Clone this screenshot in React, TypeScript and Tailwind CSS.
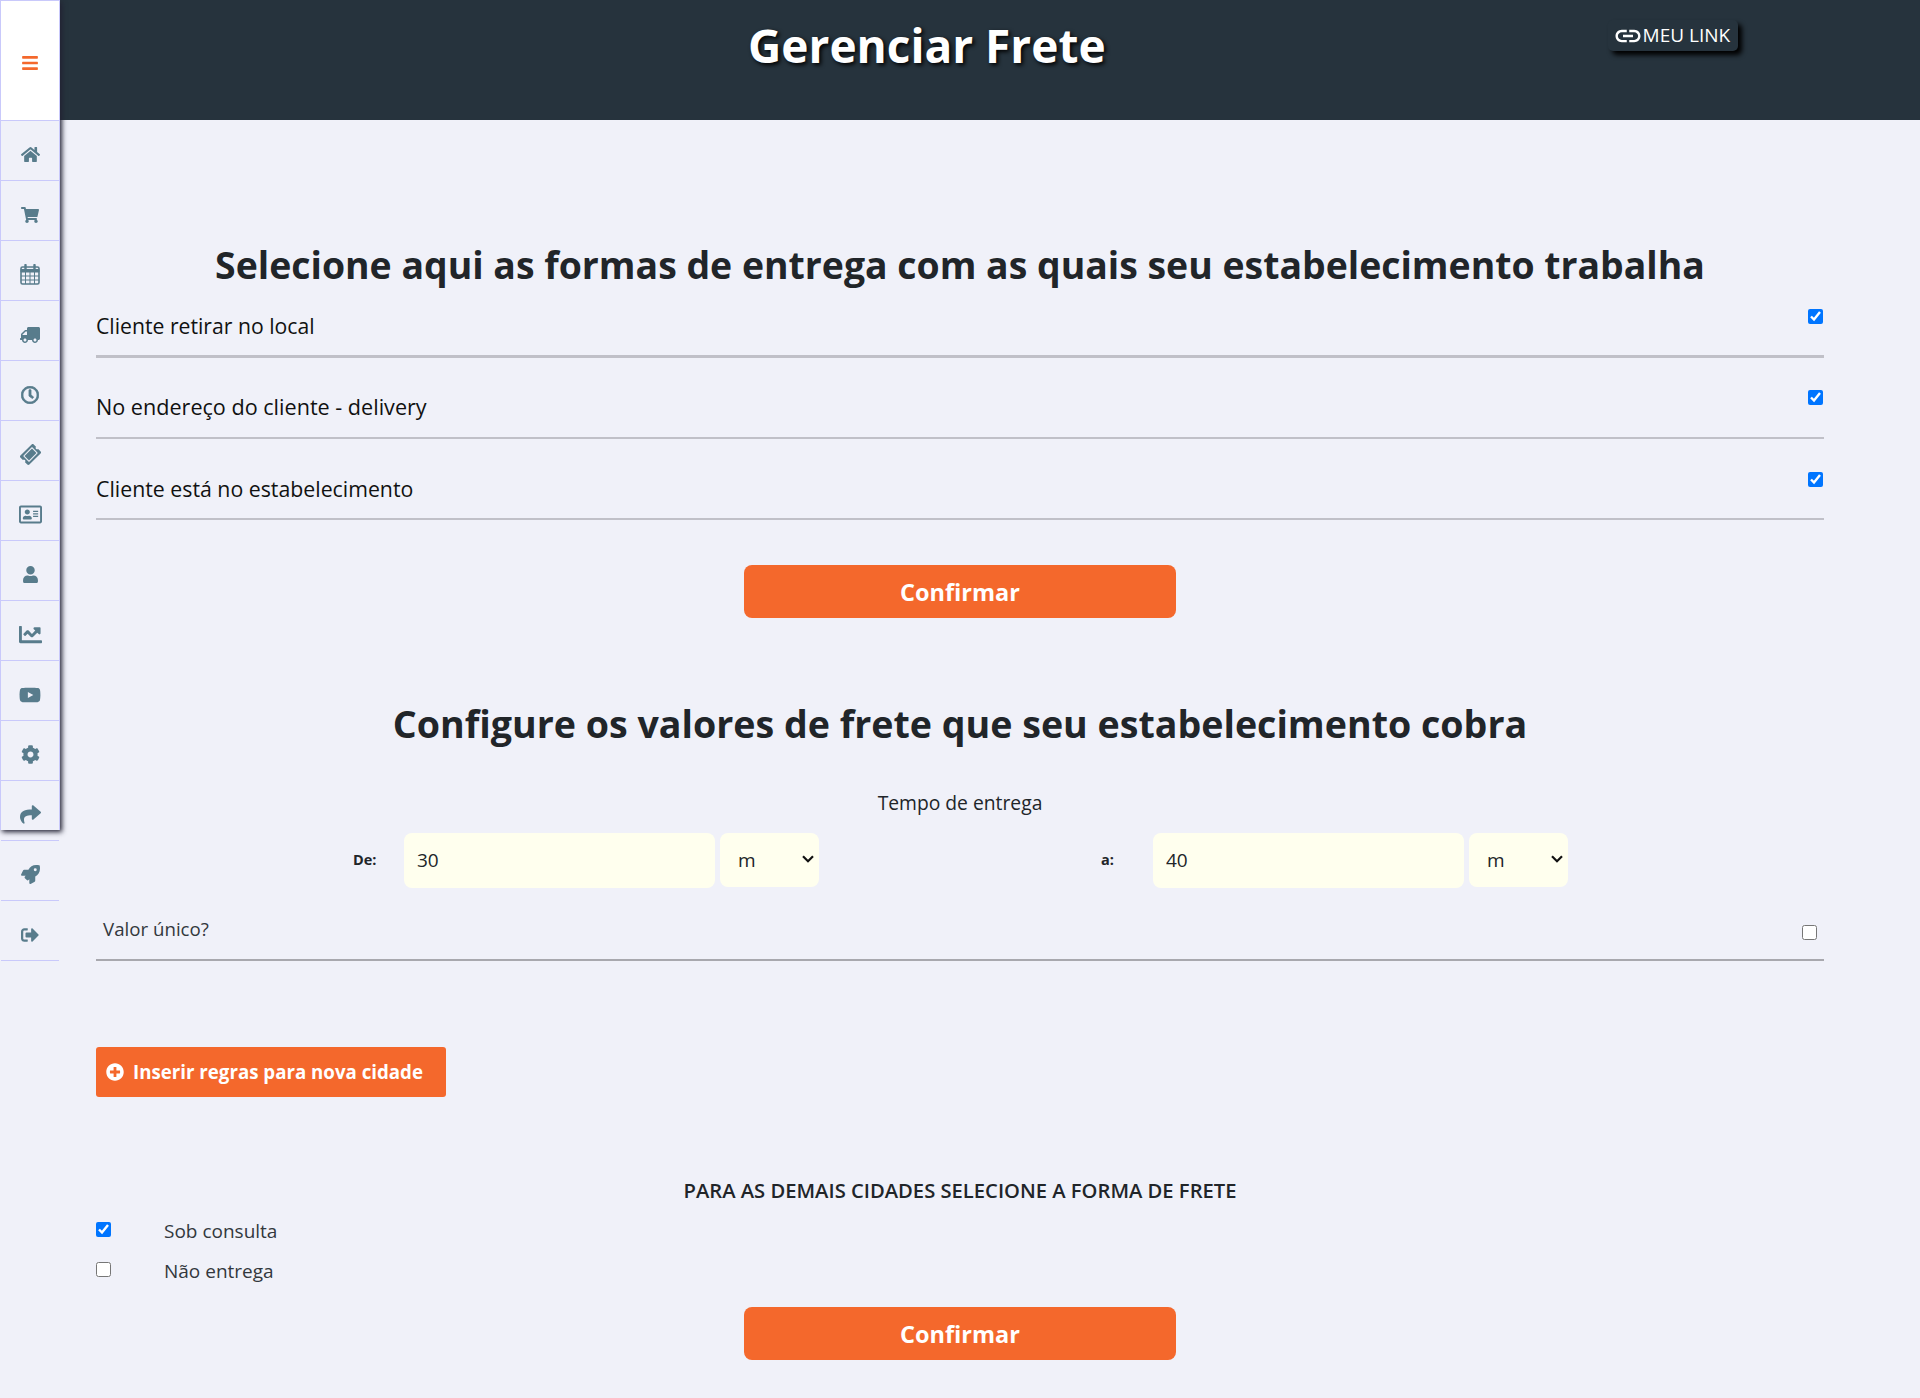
import {
  FaBars, FaHome, FaShoppingCart, FaTruck, FaRegClock, FaTicketAlt, FaRegAddressCard,
  FaUser, FaChartLine, FaYoutube, FaCog, FaShare, FaRocket, FaSignOutAlt, FaPlusCircle,
} from "react-icons/fa"
import { MdLink } from "react-icons/md"

const font = "font-['Open_Sans','Noto_Sans',sans-serif]"

const CalendarIcon = () => (
    <svg width="20" height="21" viewBox="0 0 20 21" fill="none" stroke="currentColor">
        <rect x="1" y="3" width="18" height="17" rx="1.5" strokeWidth="1.6" />
        <path d="M1 5.5h18V8H1z" fill="currentColor" strokeWidth="1" />
        <path d="M1 12h18M1 16h18M5.5 8v12M10 8v12M14.5 8v12" strokeWidth="1" />
        <path d="M5.5 1v4M14.5 1v4" strokeWidth="2.4" strokeLinecap="round" />
    </svg>
)

const SelectM = () => (
    <div className="relative ml-[5px] h-[54px] w-[99px]">
        <select className="h-full w-full appearance-none rounded-[8px] bg-[#ffffee] pl-[18px] text-[19px]"><option>m</option></select>
        <svg className="pointer-events-none absolute right-[5px] top-[22px]" width="12" height="8" viewBox="0 0 12 8" fill="none" stroke="#111" strokeWidth="2.2">
            <path d="M1 1.2l5 5 5-5" />
        </svg>
    </div>
)

const Sidebar = () => (
    <aside className="relative z-10 w-[60px] shrink-0">
        <div className="h-[830px] overflow-hidden border-x border-[#c9c9fb] shadow-[2px_2px_5px_#222233]">
            <div className="flex h-[121px] items-center justify-center border-y border-[#c9c9fb] bg-white pt-[5px]">
                <FaBars className="text-[18px] text-[#f4682c]" />
            </div>
            <div className="flex h-[60px] items-center justify-center border-b border-[#c9c9fb] pt-[8px] text-[#587c8c]"><FaHome className="text-[19px]" /></div>
            <div className="flex h-[60px] items-center justify-center border-b border-[#c9c9fb] pt-[8px] text-[#587c8c]"><FaShoppingCart className="text-[18px]" /></div>
            <div className="flex h-[60px] items-center justify-center border-b border-[#c9c9fb] pt-[8px] text-[#587c8c]"><CalendarIcon /></div>
            <div className="flex h-[60px] items-center justify-center border-b border-[#c9c9fb] pt-[8px] text-[#587c8c]"><FaTruck className="-scale-x-100 text-[20px]" /></div>
            <div className="flex h-[60px] items-center justify-center border-b border-[#c9c9fb] pt-[8px] text-[#587c8c]"><FaRegClock className="text-[18px]" stroke="currentColor" strokeWidth={24} /></div>
            <div className="flex h-[60px] items-center justify-center border-b border-[#c9c9fb] pt-[8px] text-[#587c8c]"><FaTicketAlt className="-rotate-45 text-[19px]" /></div>
            <div className="flex h-[60px] items-center justify-center border-b border-[#c9c9fb] pt-[8px] text-[#587c8c]"><FaRegAddressCard className="text-[23px]" /></div>
            <div className="flex h-[60px] items-center justify-center border-b border-[#c9c9fb] pt-[8px] text-[#587c8c]"><FaUser className="text-[17px]" /></div>
            <div className="flex h-[60px] items-center justify-center border-b border-[#c9c9fb] pt-[8px] text-[#587c8c]"><FaChartLine className="text-[23px]" /></div>
            <div className="flex h-[60px] items-center justify-center border-b border-[#c9c9fb] pt-[8px] text-[#587c8c]"><FaYoutube className="text-[22px]" /></div>
            <div className="flex h-[60px] items-center justify-center border-b border-[#c9c9fb] pt-[8px] text-[#587c8c]"><FaCog className="text-[19px]" /></div>
            <div className="flex h-[50px] items-center justify-center pt-[16px] text-[#587c8c]"><FaShare className="text-[21px]" /></div>
        </div>
        <div className="mx-px mt-[10px] border-t border-[#c9c9fb]">
            <div className="flex h-[60px] items-center justify-center border-b border-[#c9c9fb] pt-[8px] text-[#587c8c]">
                <FaRocket className="text-[19px]" />
            </div>
            <div className="flex h-[60px] items-center justify-center border-b border-[#c9c9fb] pt-[8px] text-[#587c8c]">
                <FaSignOutAlt className="text-[18px]" />
            </div>
        </div>
    </aside>
)

const CheckRow = ({ label, lineClass, mt, size }: { label: string; lineClass: string; mt: string; size: string }) => (
    <div className={`flex justify-between ${mt} ${lineClass} border-[#c0c0c8]`}>
        <span className={`mt-px pb-[13px] ${size} leading-[32px] text-[#111]`}>{label}</span>
        <input type="checkbox" defaultChecked className="m-0 mr-px h-[15px] w-[15px] shrink-0" />
    </div>
)

const ConfirmButton = ({ mt }: { mt: string }) => (
    <button className={`mx-auto ${mt} block h-[53px] w-[432px] rounded-[8px] bg-[#f4682c] pt-[2px] text-[23.5px] font-bold text-white`}>
        Confirmar
    </button>
)

const App = () => {
    return (
        <div className={`${font} flex h-[1398px] w-[1920px] overflow-hidden bg-[#f0f1f9] text-[#212529]`}>
            <Sidebar />
            <div className="min-w-0 flex-1">
                <header className="flex h-[120px] items-start bg-[#26333d] text-white">
                    <h1 className="ml-[688px] mt-[9px] text-[46px] font-bold leading-[72px] [text-shadow:2px_2px_4px_#000]">Gerenciar Frete</h1>
                    <div className="ml-[502px] mt-[20px] flex h-[31px] w-[130px] items-center rounded-[5px] pl-[5px] text-[19px] shadow-[4px_4px_5px_#000]">
                        <MdLink className="shrink-0 text-[30px]" />
                        <span>MEU LINK</span>
                    </div>
                </header>

                <main className="pl-[36px] pr-[96px]">
                    <h2 className="mt-[115px] pt-px text-center text-[37.4px] font-bold leading-[57px]">
                        Selecione aqui as formas de entrega com as quais seu estabelecimento trabalha
                    </h2>
                    <CheckRow label="Cliente retirar no local" size="text-[21.2px]" lineClass="border-b-[3px]" mt="mt-[16px]" />
                    <CheckRow label="No endereço do cliente - delivery" size="text-[21.6px]" lineClass="border-b-2 pb-px" mt="mt-[32px]" />
                    <CheckRow label="Cliente está no estabelecimento" size="text-[21.3px]" lineClass="border-b-2" mt="mt-[33px]" />
                    <ConfirmButton mt="mt-[45px]" />

                    <h2 className="mt-[77px] text-center text-[37.6px] font-bold leading-[58px]">
                        Configure os valores de frete que seu estabelecimento cobra
                    </h2>
                    <p className="mt-[36px] text-center text-[19.3px] font-medium leading-[28px]">Tempo de entrega</p>

                    <div className="mt-[15px] flex h-[56px] items-center">
                        <label className="ml-[257px] w-[51px] text-[14.5px] font-bold">De:</label>
                        <input defaultValue="30" className="h-[55px] w-[311px] rounded-[8px] bg-[#ffffee] px-[13px] text-[19px] outline-none" />
                        <SelectM />
                        <label className="ml-[282px] w-[52px] text-[14.5px] font-bold">a:</label>
                        <input defaultValue="40" className="h-[55px] w-[311px] rounded-[8px] bg-[#ffffee] px-[13px] text-[19px] outline-none" />
                        <SelectM />
                    </div>

                    <div className="mt-[24px] flex h-[49px] justify-between border-b-2 border-[#a8a8ae] pl-[7px] pr-[7px]">
                        <span className="text-[18.7px] leading-[33px] text-[#33383d]">Valor único?</span>
                        <input type="checkbox" className="mt-[13px] h-[15px] w-[15px]" />
                    </div>

                    <button className="mt-[86px] flex h-[50px] w-[350px] items-center gap-[9px] rounded-[3px] bg-[#f4682c] pl-[10px] text-[18.7px] font-bold text-white">
                        <FaPlusCircle className="text-[18px]" />
                        Inserir regras para nova cidade
                    </button>

                    <p className="mt-[77px] text-center text-[20.2px] font-semibold leading-[32px]">PARA AS DEMAIS CIDADES SELECIONE A FORMA DE FRETE</p>

                    <div className="mt-[16px] flex h-[40px] items-start">
                        <input type="checkbox" defaultChecked className="h-[15px] w-[15px]" />
                        <span className="ml-[53px] text-[19px] leading-[19px] text-[#33383d]">Sob consulta</span>
                    </div>
                    <div className="flex h-[45px] items-start">
                        <input type="checkbox" className="h-[15px] w-[15px]" />
                        <span className="ml-[53px] text-[19px] leading-[19px] text-[#33383d]">Não entrega</span>
                    </div>
                    <ConfirmButton mt="mt-0" />
                </main>
            </div>
        </div>
    )
}

export default App
